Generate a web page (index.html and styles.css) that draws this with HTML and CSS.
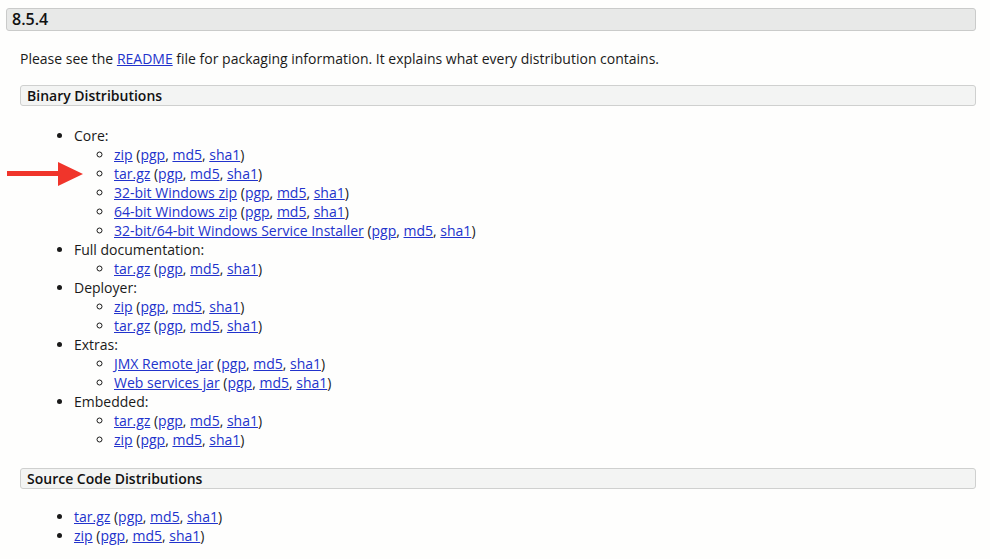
FILE: index.html
```html
<!DOCTYPE html>
<html>
<head>
<meta charset="utf-8">
<link rel="stylesheet" href="styles.css">
</head>
<body>
<div class="page">
  <h3 class="release">8.5.4</h3>
  <div class="section">
    <p class="intro">Please see the <a href="#">README</a> file for packaging information. It explains what every distribution contains.</p>
    <h4 class="dist">Binary Distributions</h4>
    <div class="listwrap">
      <svg class="arrow" width="80" height="26" viewBox="0 0 80 26"><path d="M0 10 H51 V1 L76 13 L51 25 V15 H0 Z" fill="#f0352b"/></svg>
      <ul class="outer">
        <li>Core:
          <ul class="inner">
            <li><a href="#">zip</a> (<a href="#">pgp</a>, <a href="#">md5</a>, <a href="#">sha1</a>)</li>
            <li><a href="#">tar.gz</a> (<a href="#">pgp</a>, <a href="#">md5</a>, <a href="#">sha1</a>)</li>
            <li><a href="#">32-bit Windows zip</a> (<a href="#">pgp</a>, <a href="#">md5</a>, <a href="#">sha1</a>)</li>
            <li><a href="#">64-bit Windows zip</a> (<a href="#">pgp</a>, <a href="#">md5</a>, <a href="#">sha1</a>)</li>
            <li><a href="#">32-bit/64-bit Windows Service Installer</a> (<a href="#">pgp</a>, <a href="#">md5</a>, <a href="#">sha1</a>)</li>
          </ul>
        </li>
        <li>Full documentation:
          <ul class="inner">
            <li><a href="#">tar.gz</a> (<a href="#">pgp</a>, <a href="#">md5</a>, <a href="#">sha1</a>)</li>
          </ul>
        </li>
        <li>Deployer:
          <ul class="inner">
            <li><a href="#">zip</a> (<a href="#">pgp</a>, <a href="#">md5</a>, <a href="#">sha1</a>)</li>
            <li><a href="#">tar.gz</a> (<a href="#">pgp</a>, <a href="#">md5</a>, <a href="#">sha1</a>)</li>
          </ul>
        </li>
        <li>Extras:
          <ul class="inner">
            <li><a href="#">JMX Remote jar</a> (<a href="#">pgp</a>, <a href="#">md5</a>, <a href="#">sha1</a>)</li>
            <li><a href="#">Web services jar</a> (<a href="#">pgp</a>, <a href="#">md5</a>, <a href="#">sha1</a>)</li>
          </ul>
        </li>
        <li>Embedded:
          <ul class="inner">
            <li><a href="#">tar.gz</a> (<a href="#">pgp</a>, <a href="#">md5</a>, <a href="#">sha1</a>)</li>
            <li><a href="#">zip</a> (<a href="#">pgp</a>, <a href="#">md5</a>, <a href="#">sha1</a>)</li>
          </ul>
        </li>
      </ul>
    </div>
    <h4 class="dist dist-source">Source Code Distributions</h4>
    <ul class="outer source">
      <li><a href="#">tar.gz</a> (<a href="#">pgp</a>, <a href="#">md5</a>, <a href="#">sha1</a>)</li>
      <li><a href="#">zip</a> (<a href="#">pgp</a>, <a href="#">md5</a>, <a href="#">sha1</a>)</li>
    </ul>
  </div>
</div>
</body>
</html>
```

FILE: styles.css
```css
html, body {
  margin: 0;
  padding: 0;
  background: #fefefd;
}
body {
  font-family: "Open Sans", "Liberation Sans", sans-serif;
  font-size: 14px;
  line-height: 19px;
  color: #1a1a1a;
}
.page {
  padding: 8px 14px 0 6px;
}
a {
  color: #2233cc;
  text-decoration: underline;
}
.release {
  margin: 0;
  height: 21px;
  line-height: 21px;
  font-size: 16px;
  font-weight: 600;
  padding: 0 5px;
  background: #e8e9e8;
  border: 1px solid #cacbca;
  border-radius: 3px;
  color: #111;
}
.section {
  padding-left: 14px;
}
.intro {
  margin: 18px 0 0 0;
}
.dist {
  margin: 17px 0 0 0;
  height: 19px;
  line-height: 19px;
  font-size: 14px;
  font-weight: 600;
  padding: 0 6px;
  background: #f3f4f3;
  border: 1px solid #cfd0cf;
  border-radius: 3px;
  color: #111;
}
.dist-source {
  margin-top: 19px;
}
.listwrap {
  position: relative;
}
.arrow {
  position: absolute;
  left: -13px;
  top: 35px;
}
.outer {
  margin: 20px 0 0 0;
  padding-left: 54px;
  list-style: disc;
}
.inner {
  margin: 0;
  padding-left: 40px;
  list-style: circle;
}
.source {
  margin-top: 18px;
}
```
